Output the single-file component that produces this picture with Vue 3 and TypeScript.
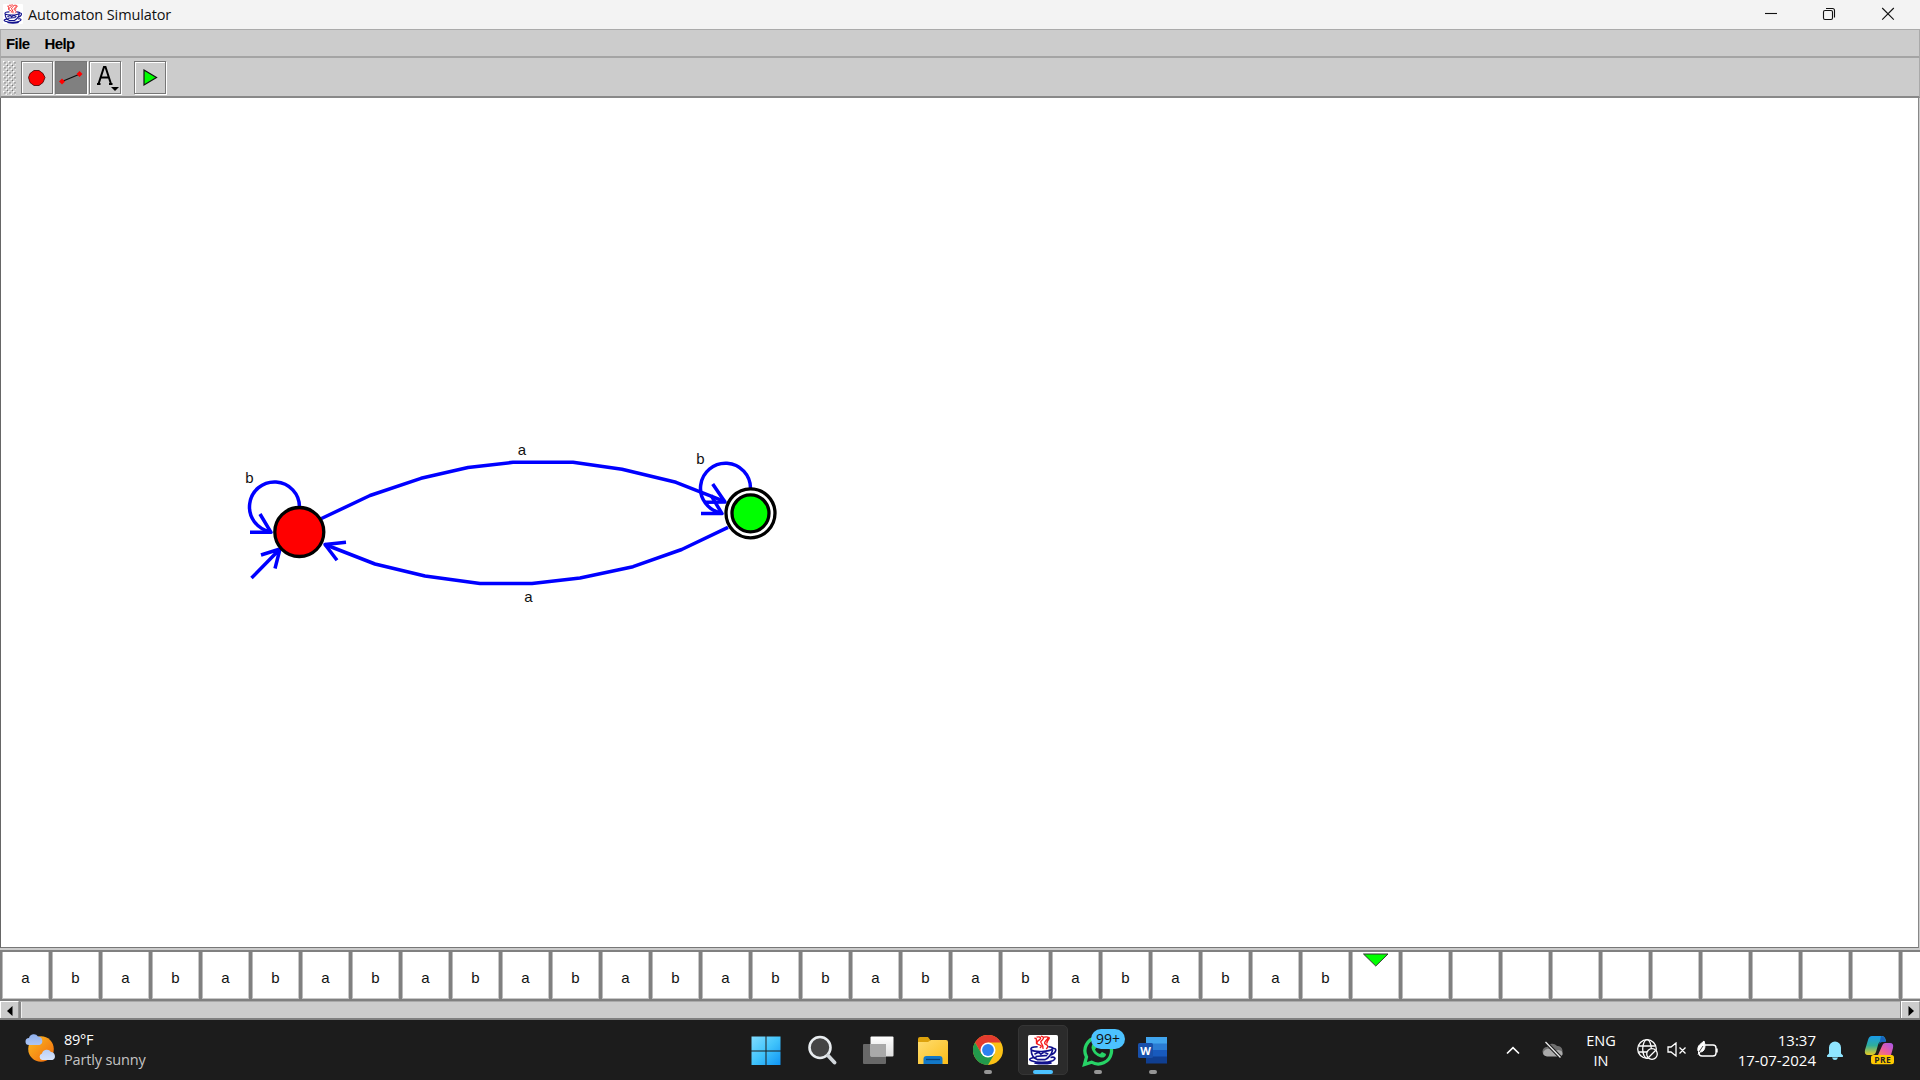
<script setup lang="ts">
interface Label {
  text: string
  x: number
  y: number
}

const tape: string[] = [...'abababababababa', ...'bbabababababab'.slice(0, 12)]
const cells: string[] = Array.from({ length: 39 }, (_, i) => tape[i] ?? '')
const headIndex = 27

const labels: Label[] = [
  { text: 'a', x: 521.8, y: 455 },
  { text: 'a', x: 528.3, y: 602 },
  { text: 'b', x: 249.3, y: 483 },
  { text: 'b', x: 700.3, y: 464 },
]
</script>

<template>
  <div class="window">
    <svg width="0" height="0" class="defs">
      <symbol id="cup" viewBox="0 0 28 28">
        <rect width="28" height="28" rx="1.5" fill="#fff" />
        <g fill="none" stroke="#f51a1a" stroke-width="1.3">
          <path d="M8 2c4-1 5 1 2 3s-3 3 0 4 3 2 1 3M12 1c5 1 1 4 0 5s3 3 2 7M15 2c5-1 4 1 2 3s-2 3 0 4 2 2 0 4M6 3c4 0 0 3 3 5M19 2c3 1-3 4-1 6" />
        </g>
        <g fill="none" stroke="#10108c" stroke-width="1.5">
          <path d="M9 11c-5 0-7 1-6 3 3 2 17 2 20-1 1-1-1-2-4-2M3 14c0 5 3 8 6 9h7c4-2 6-5 7-9M22 13c6-2 5 4-2 6M6 18l4-2 2 2 3-2 4 2M7 20l11-1" />
          <path d="M8 21c-6 0-8 2-5 3 5 2 15 2 20 0 4-2 2-4-2-3M6 26c5 1 11 1 16 0" />
        </g>
      </symbol>
    </svg>

    <header class="title">
      <svg class="cup" width="20" height="20"><use href="#cup" /></svg>
      <span class="caption">Automaton Simulator</span>
      <svg class="controls" width="150" height="29" fill="none" stroke="#111" stroke-width="1.1">
        <path d="M15 13.5h12" />
        <rect x="73.5" y="10.5" width="9" height="9" rx="1.5" />
        <path d="M76 8.500h6.500q2 0 2 2v7" />
        <path d="M132.200 8l11.600 11.600M143.800 8l-11.600 11.600" />
      </svg>
    </header>

    <nav class="menu"><span class="file">File</span><span>Help</span></nav>

    <div class="toolbar">
      <svg class="grip" width="13" height="34">
        <defs>
          <pattern id="dots" width="5" height="5" patternUnits="userSpaceOnUse">
            <path d="M0 0h1.500v1.500h-1.500zM2.500 2.500h1.500v1.500h-1.500z" fill="#fff" />
            <path d="M1.300 1.300h1.300v1.300h-1.300zM3.800 3.800h1.200v1.200h-1.200z" fill="#777" />
          </pattern>
        </defs>
        <rect width="13" height="34" fill="url(#dots)" />
      </svg>
      <div class="tool">
        <svg width="30" height="30"><path d="M12 8.500h5l4 3 2 4-2 5-4 3h-5l-4-3-1.500-5 1.500-4z" fill="#f00" stroke="#400" stroke-width=".8" /></svg>
      </div>
      <div class="tool active">
        <svg width="30" height="30"><path d="M6 19.500 24 12" stroke="#111" stroke-width="1.300" /><path d="M6 16.500l3 3-3 3-3-3zM23.500 9l3 3-3 3-3-3z" fill="#f00" /></svg>
      </div>
      <div class="tool">
        <svg width="30" height="30"><path d="M8.500 22 14 5h1.500l5.500 17M10.500 15.500h9M7 22h3.500M19 22h3.500" fill="none" stroke="#000" stroke-width="2" /><path d="M21 25h8l-4 4z" /></svg>
      </div>
      <div class="tool run">
        <svg width="30" height="30"><path d="M9 8 21.500 15.500 9 23z" fill="#0f0" stroke="#111" stroke-width="1.200" /></svg>
      </div>
    </div>

    <main class="canvas">
      <svg width="1916" height="849" viewBox="1 98 1916 849">
        <g fill="none" stroke="#00f" stroke-width="3.500" stroke-linejoin="round">
          <polyline points="321.5,518.5 370,495.500 421,478.300 468,467.500 513,462.300 573,462.300 622,469.300 676,482.300 725,501.700" />
          <path d="M712.700 484 725 502 705 502.300" />
          <polyline points="728,527.300 681.700,549.500 633,566.700 580,578 532,583.500 480,583.500 425,576 375,564 325,544.500" />
          <path d="M346 542.300 325 544.500 337 560.300" />
          <g v-for="dx in [0, 451]" :key="dx" :transform="`translate(${dx} ${dx ? -18.700 : 0})`">
            <path d="M299.500 507A25 25 0 1 0 270 531.500" />
            <path d="M260 514 271 532.300H250" />
          </g>
          <path d="M251.500 578 280 549M261 555l19-6-5 19.500" />
        </g>
        <g stroke="#000" stroke-width="3.300">
          <circle cx="299.300" cy="532" r="24.500" fill="#f00" />
          <circle cx="750.500" cy="513.300" r="24.500" fill="#fff" />
          <circle cx="750.500" cy="513.300" r="18.500" fill="#0f0" />
        </g>
        <text v-for="l in labels" :key="`${l.x}`" :x="l.x" :y="l.y" text-anchor="middle">{{ l.text }}</text>
      </svg>
    </main>

    <section class="tape">
      <div v-for="(c, i) in cells" :key="i" class="cell">
        <svg v-if="i === headIndex" class="head" width="28" height="15"><path d="M1.500 1h24.500L13.750 13z" fill="#0f0" stroke="#333" /></svg>
        <span v-else>{{ c }}</span>
      </div>
    </section>

    <div class="scroll">
      <div class="arrow"><svg width="18" height="17"><path d="M6 9 11.500 4v10z" /></svg></div>
      <div class="thumb"></div>
      <div class="arrow"><svg width="18" height="17"><path d="M12 9 6.500 4v10z" /></svg></div>
    </div>

    <footer class="taskbar">
      <div class="weather">
        <svg width="32" height="32">
          <defs>
            <linearGradient id="sun" x1="0" y1="0" x2="1" y2="1"><stop stop-color="#fbbd22" /><stop offset="1" stop-color="#f2670b" /></linearGradient>
            <linearGradient id="cloud" x1="0" y1="0" x2="0" y2="1"><stop stop-color="#8fb0ee" /><stop offset="1" stop-color="#d7e4fb" /></linearGradient>
          </defs>
          <circle cx="16" cy="17" r="12.800" fill="url(#sun)" />
          <path d="M4 13a3.500 3.500 0 0 1 0-7 5 5 0 0 1 9-1.500 4.400 4.400 0 0 1 1.500 8.500zM17 28a3.400 3.400 0 0 1 0-6.500 5 5 0 0 1 9-1.500 4.200 4.200 0 0 1 1.500 8z" fill="url(#cloud)" />
        </svg>
        <div class="forecast"><span>89°F</span><span class="dim">Partly sunny</span></div>
      </div>

      <div class="apps">
        <div class="app">
          <svg width="30" height="30"><defs><linearGradient id="win" x1="0" y1="0" x2="1" y2="1"><stop stop-color="#81dcff" /><stop offset=".5" stop-color="#41c4fb" /><stop offset="1" stop-color="#0f94f4" /></linearGradient></defs><path d="M.5 1.500h14v14H.5zM15.500 1.500h14v14h-14zM.5 16.500h14v13.500H.5zM15.500 16.500h14v13.500h-14z" fill="url(#win)" /></svg>
        </div>
        <div class="app">
          <svg width="30" height="30"><circle cx="13" cy="12.500" r="10.500" fill="#454545" stroke="#e8ecef" stroke-width="2.600" /><path d="M21 20.500l6.500 7" stroke="#d2d7db" stroke-width="3.800" stroke-linecap="round" /></svg>
        </div>
        <div class="app">
          <svg width="32" height="30"><defs><linearGradient id="pane" x1="0" y1="0" x2="0" y2="1"><stop stop-color="#fff" /><stop offset="1" stop-color="#dedede" /></linearGradient></defs><rect x="1" y="9" width="23" height="20" rx="1" fill="#686868" /><rect x="8.500" y="1.500" width="23" height="20" rx="1" fill="url(#pane)" /><path d="M8.500 9H24v12.500H8.500z" fill="#a9a9a9" /></svg>
        </div>
        <div class="app">
          <svg width="32" height="30"><defs><linearGradient id="folder" x1="0" y1="0" x2="1" y2="1"><stop stop-color="#ffdd70" /><stop offset="1" stop-color="#fbbd19" /></linearGradient></defs><path d="M1 12V4q0-2 2-2h8l3 4v6z" fill="#dda20c" /><path d="M1 7h10l3-2h15q2 0 2 2v22H1z" fill="url(#folder)" /><path d="M6.500 29v-5q0-3 3-3h13q3 0 3 3v5z" fill="#1278c8" /><path d="M9 24.500h14" stroke="#073f77" stroke-width="1.300" /></svg>
        </div>
        <div class="app">
          <svg width="30" height="30" viewBox="-15 -15 30 30"><circle r="15" fill="#fbc116" /><path d="M-13-7.500A15 15 0 0 1 13-7.500H0L-6.500 3.750z" fill="#e33b2e" /><path d="M-13-7.500A15 15 0 0 0 0 15L6.500 3.750H-6.500z" fill="#229a4c" /><circle r="7.500" fill="#fff" /><circle r="5.900" fill="#2c80f0" /></svg>
          <i></i>
        </div>
        <div class="app current"><svg width="30" height="30"><use href="#cup" /></svg><i></i></div>
        <div class="app">
          <svg width="32" height="32" fill="none"><path d="M2.500 29.500 4.500 22a13.300 13.300 0 1 1 5 5.200z" stroke="#27d366" stroke-width="3.300" /><path d="M10 10c1-2 3-2 3.500-.5l1 3-1.500 2c1 2 2.500 3.500 5 4.500l2-2 4 2c0 3-3 4-5 3.500-5-1.500-9-5.500-9.500-10z" fill="#27d366" /></svg>
          <b class="badge">99+</b><i></i>
        </div>
        <div class="app">
          <svg width="30" height="30"><path d="M8 2h21v7H8z" fill="#41a5ee" /><path d="M8 8.500h21v7H8z" fill="#2b7cd3" /><path d="M8 15h21v7H8z" fill="#185abd" /><path d="M8 21.500h21v7H8z" fill="#103f91" /><rect y="8" width="15" height="15" rx="1.500" fill="#1850aa" /><text x="7.500" y="19.800" text-anchor="middle" class="word">W</text></svg>
          <i></i>
        </div>
      </div>

      <div class="tray">
        <svg class="chev" width="14" height="9" fill="none" stroke="#fff" stroke-width="1.700"><path d="M1 7.500 7 1.700l6 5.800" /></svg>
        <svg class="onedrive" width="22" height="18"><path d="M5 15a4.500 4.500 0 0 1 0-9 6 6 0 0 1 10-1 5 5 0 0 1 1 10z" fill="#6f6f6f" /><path d="M5 15.500q-5-1-3.500-5 3-4 7-2l4 2q4-3 7.500 0 2 4-2 5z" fill="#aaa" /><path d="M4 1.500 19 17" stroke="#1c1c1c" stroke-width="3.500" /><path d="M3.500 1 18.500 16.500" stroke="#eee" stroke-width="1.300" /></svg>
        <div class="lang"><span>ENG</span><span>IN</span></div>
        <svg class="globe" width="22" height="22" fill="none" stroke="#fff" stroke-width="1.300"><circle cx="10" cy="10" r="9.300" /><ellipse cx="10" cy="10" rx="4.300" ry="9.300" /><path d="M1.500 7h17M1.500 13h17" /><circle cx="15" cy="15" r="5.300" fill="#1c1c1c" /><path d="M11.500 18.500l7-7" /></svg>
        <svg class="volume" width="20" height="16" fill="none" stroke="#fff" stroke-width="1.300"><path d="M1 5h3l5-4v13l-5-4H1zM12.500 5.500l6 6M18.500 5.500l-6 6" /></svg>
        <svg class="battery" width="22" height="20" fill="none" stroke="#fff" stroke-width="1.400"><path d="M8 5h8q3 0 3 3v5q0 3-3 3H5q-3 0-3-3M20 8.500v4" /><path d="M1 11C0 5 4 4 7 1c2 5 1 11-4 11L1 14.500" fill="#fff" stroke-width="1" /><path d="M2 12 6 6" stroke="#1c1c1c" stroke-width=".8" /></svg>
        <div class="clock"><span>13:37</span><span>17-07-2024</span></div>
        <svg class="bell" width="18" height="20"><path d="M3 13.500V7.500a6 6 0 0 1 12 0v6l2 2q.5 1.500-1 1.500H2q-1.500 0-1-1.500zM6 17.500h6q-.8 2.500-3 2.500t-3-2.500z" fill="#8fe5ff" /></svg>
        <svg class="copilot" width="32" height="30">
          <defs>
            <linearGradient id="cpA" x1="0" y1="0" x2="0" y2="1"><stop stop-color="#199bea" /><stop offset=".5" stop-color="#2fae9b" /><stop offset="1" stop-color="#eacb20" /></linearGradient>
            <linearGradient id="cpB" x1="1" y1="0" x2="0" y2="1"><stop stop-color="#a557ed" /><stop offset=".6" stop-color="#ec5c9e" /><stop offset="1" stop-color="#f6855c" /></linearGradient>
          </defs>
          <path d="M8 1h10q3 0 4 5h-4q-3 0-4 4l-2 7q-1 3-4 3H4q-4 0-3-5L4 5q1-4 4-4z" fill="url(#cpA)" />
          <path d="M17 1q4 0 5 6h-4q-2 0-3 3z" fill="#1764bd" />
          <path d="M21 8h5q4 0 3 5l-2 7H14l4-9q1-3 3-3z" fill="url(#cpB)" />
          <rect x="7" y="20" width="23" height="9.300" rx="2.500" fill="#ffc900" />
          <text x="18.700" y="27.600" text-anchor="middle" class="pre">PRE</text>
        </svg>
      </div>
    </footer>
  </div>
</template>

<style>
body { margin: 0; overflow: hidden; }
</style>

<style scoped>
* { box-sizing: border-box; }
svg { display: block; flex: none; }
.defs { position: absolute; }
.window { width: 1920px; height: 1080px; display: flex; flex-direction: column; background: #ccc; font-family: 'Liberation Sans', Arial, sans-serif; color: #000; }
.title { height: 29px; flex: none; display: flex; align-items: center; background: #f3f3f3; padding-left: 3px; font-family: 'Open Sans', 'Noto Sans', sans-serif; }
.cup { margin-top: -2px; }
.caption { margin-left: 5px; font-size: 14.5px; color: #111; letter-spacing: -.12px; line-height: 30px; height: 29px; }
.controls { margin-left: auto; margin-right: 20px; }
.menu { height: 29px; flex: none; display: flex; align-items: center; gap: 15px; padding: 0 0 0 5px; font-weight: bold; font-size: 15px; letter-spacing: -.6px; border-top: 1px solid #aaa; border-right: 1px solid #aaa; border-bottom: 2px solid #a4a4a4; border-left: 1px solid #aaa; }
.toolbar { height: 40px; flex: none; display: flex; align-items: flex-start; padding: 3px 0 0 2px; border-left: 1px solid #aaa; border-right: 1px solid #aaa; border-bottom: 2px solid #888; }
.grip { margin-right: 5px; }
.tool { width: 32px; height: 33px; margin-right: 2px; border: 1px solid #777; box-shadow: 1px 1px 0 #fff, inset 1px 1px 0 #fff; display: flex; overflow: visible; }
.tool.active { background: #808080; box-shadow: 1px 1px 0 #fff; }
.tool.run { margin-left: 11px; }
.canvas { height: 850px; flex: none; width: 1919px; background: #fff; border-left: 1px solid #666; border-right: 1px solid #888; border-bottom: 1px solid #777; overflow: hidden; }
.canvas text { font-size: 15px; fill: #111; }
.tape { height: 51px; margin-top: 2px; flex: none; display: flex; background: #808080; padding: 2px 0 2px 2px; overflow: hidden; }
.cell { width: 47px; height: 47px; flex: none; margin-right: 3px; background: #fff; border: 1px solid #c8c8c8; border-top-width: 0; border-left-color: #bbb; display: flex; justify-content: center; align-items: center; font-size: 15px; padding-top: 5px; color: #111; }
.head { align-self: flex-start; margin-top: -4px; }
.scroll { height: 19px; flex: none; display: flex; background: #ccc; border-bottom: 2px solid #808080; }
.arrow { width: 19px; border: 1px solid #fff; border-right-color: #999; border-bottom: 0; }
.thumb { flex: 1; border-left: 2px solid #888; border-right: 1px solid #888; border-top: 1px solid #aaa; box-shadow: inset 1px 0 #eee; }
.taskbar { height: 60px; flex: none; display: flex; position: relative; background: #1c1c1c; color: #fff; font-family: 'Open Sans', 'Noto Sans', sans-serif; font-size: 14.5px; }
.weather { display: flex; width: 739px; padding: 12px 0 0 25px; }
.forecast { display: flex; flex-direction: column; margin: -2px 0 0 7px; line-height: 20px; letter-spacing: -.25px; }
.dim { color: #c4c4c4; letter-spacing: -.15px; }
.apps { display: flex; gap: 5px; padding-top: 5px; }
.app { width: 50px; height: 50px; position: relative; display: flex; justify-content: center; padding-top: 10px; border-radius: 5px; }
.app:nth-child(1) { margin-left: 2px; }
.app:nth-child(2), .app:nth-child(3) { margin-left: 1px; }
.app:nth-child(3) { margin-right: 0; }
.app i { position: absolute; bottom: 1px; left: 21px; width: 8px; height: 4px; border-radius: 2px; background: #969696; }
.app.current { background: #2b2b2b; border: 1px solid #353535; padding-top: 9px; }
.app.current i { left: 14px; width: 20px; bottom: 0; background: #4cc2ff; }
.badge { position: absolute; left: 18px; top: 4px; width: 34px; height: 20px; border-radius: 10px; background: #4cc2ff; color: #111; font-size: 14px; font-weight: normal; line-height: 20px; text-align: center; }
.word { font: bold 11px 'Open Sans', sans-serif; fill: #fff; }
.tray { position: absolute; left: 1506px; top: 0; width: 414px; height: 60px; display: flex; align-items: center; }
.chev { margin-right: 22px; }
.lang { width: 44px; margin-left: 15px; display: flex; flex-direction: column; text-align: center; line-height: 20px; margin-top: 1px; }
.globe { margin-left: 14px; }
.volume { margin-left: 8px; }
.battery { margin-left: 10px; }
.clock { width: 92px; margin-left: 5px; display: flex; flex-direction: column; text-align: right; line-height: 20px; letter-spacing: 0; font-size: 15px; white-space: nowrap; margin-top: -1px; }
.bell { margin-left: 10px; }
.copilot { margin-left: 20px; }
.pre { font: bold 8.500px 'Open Sans', sans-serif; fill: #222; letter-spacing: .4px; }
</style>
